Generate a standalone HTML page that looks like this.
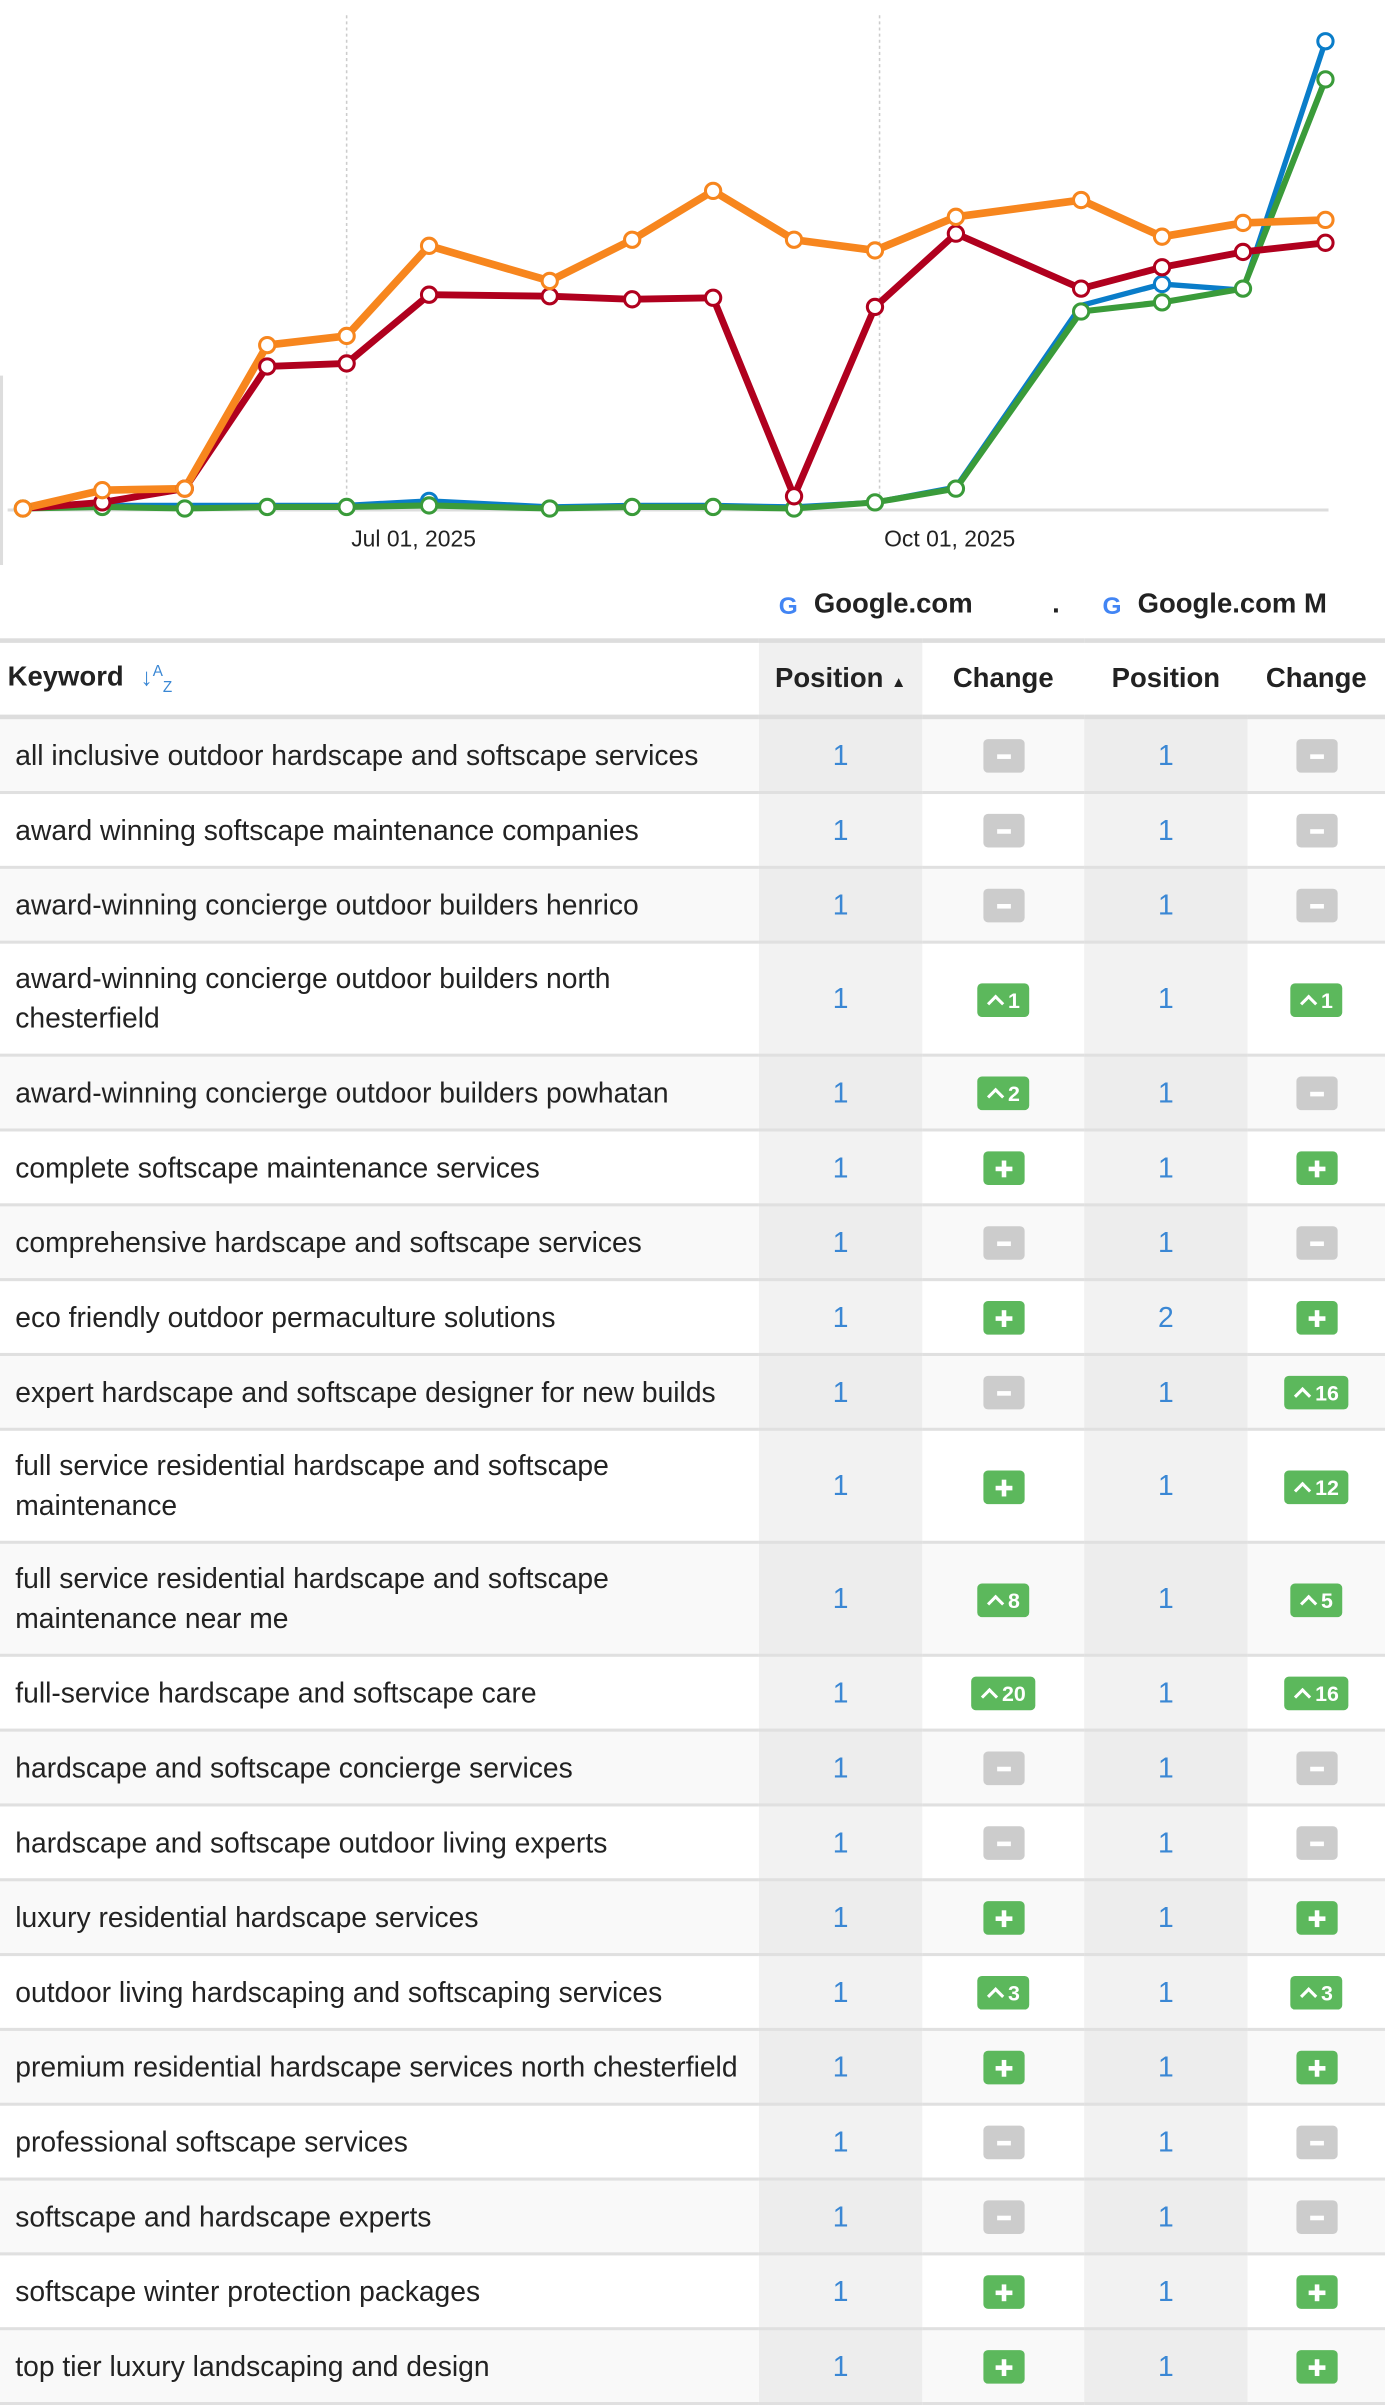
<!DOCTYPE html>
<html><head><meta charset="utf-8">
<style>
html,body{margin:0;padding:0;background:#fff;width:1385px;height:2395px;overflow:hidden}
#w{position:absolute;left:0;top:0;width:907px;height:1568px;transform:scale(1.52701);transform-origin:0 0;font-family:"Liberation Sans",Arial,sans-serif;color:#222}
table{position:absolute;left:0;top:418px;width:907px;border-collapse:collapse;table-layout:fixed;border-top:3px solid #ddd}
td,th{padding:0;font-size:18.5px;border-bottom:2px solid #e0e0e0}
th{height:47px;font-weight:bold;text-align:center;border-bottom:3px solid #ddd;font-size:18px}
th.k{text-align:left;padding-left:5px}
td.k{padding-left:10px;padding-right:8px;line-height:26px}
td.p{text-align:center;color:#3a87d4;background:#f2f2f2}
td.c{text-align:center}
tr.g td{background:#f9f9f9}
tr.g td.p{background:#ededed}
tr.s td{height:47px}
tr.d td{height:72px}
.b{display:inline-block;height:22px;line-height:22px;border-radius:3px;color:#fff;font-weight:bold;font-size:14px;vertical-align:middle;position:relative}
.m{width:27px;background:#ccc}
.m:after{content:"";position:absolute;left:9px;top:10px;width:9px;height:3px;background:#fff}
.pl{width:27px;background:#5cb85c}
.pl:before{content:"";position:absolute;left:8px;top:10px;width:11px;height:3px;background:#fff}
.pl:after{content:"";position:absolute;left:12px;top:6px;width:3px;height:11px;background:#fff}
.u{background:#5cb85c;padding:0 6px}
.u i{display:inline-block;width:6px;height:6px;border-left:2.5px solid #fff;border-top:2.5px solid #fff;transform:rotate(45deg);margin:0 4px 0 2px;position:relative;top:1px}
</style></head><body><div id="w">
<svg width="907" height="415" style="position:absolute;left:0;top:0">
<line x1="227" y1="10" x2="227" y2="334" stroke="#ccc" stroke-dasharray="2,2"/>
<line x1="576" y1="10" x2="576" y2="334" stroke="#ccc" stroke-dasharray="2,2"/>
<line x1="5" y1="334" x2="870" y2="334" stroke="#ddd" stroke-width="2"/>
<line x1="1" y1="246" x2="1" y2="370" stroke="#ddd" stroke-width="2"/>
<g fill="none" stroke-linejoin="round">
<polyline stroke="#0a7dc9" stroke-width="3.5" points="15,332 67,331 121,331 175,331 227,331 281,328 360,332 414,331 467,331 520,332 573,329 626,319 708,200 761,186 814,190 868,27"/>
<polyline stroke="#3a9b3a" stroke-width="4" points="15,333 67,332 121,333 175,332 227,332 281,331 360,333 414,332 467,332 520,333 573,329 626,320 708,204 761,198 814,189 868,52"/>
<polyline stroke="#b0001e" stroke-width="4.5" points="15,333 67,329 121,320 175,240 227,238 281,193 360,194 414,196 467,195 520,325 573,201 626,153 708,189 761,175 814,165 868,159"/>
<polyline stroke="#f7861e" stroke-width="5" points="15,333 67,321 121,320 175,226 227,220 281,161 360,184 414,157 467,125 520,157 573,164 626,142 708,131 761,155 814,146 868,144"/>
</g>
<g fill="#fff" stroke-width="2">
<g stroke="#0a7dc9"><circle cx="761" cy="186" r="5"/><circle cx="868" cy="27" r="5"/><circle cx="281" cy="328" r="5"/></g>
<g stroke="#3a9b3a"><circle cx="15" cy="333" r="5"/><circle cx="67" cy="332" r="5"/><circle cx="121" cy="333" r="5"/><circle cx="175" cy="332" r="5"/><circle cx="227" cy="332" r="5"/><circle cx="281" cy="331" r="5"/><circle cx="360" cy="333" r="5"/><circle cx="414" cy="332" r="5"/><circle cx="467" cy="332" r="5"/><circle cx="520" cy="333" r="5"/><circle cx="573" cy="329" r="5"/><circle cx="626" cy="320" r="5"/><circle cx="708" cy="204" r="5"/><circle cx="761" cy="198" r="5"/><circle cx="814" cy="189" r="5"/><circle cx="868" cy="52" r="5"/></g>
<g stroke="#b0001e"><circle cx="67" cy="329" r="5"/><circle cx="121" cy="320" r="5"/><circle cx="175" cy="240" r="5"/><circle cx="227" cy="238" r="5"/><circle cx="281" cy="193" r="5"/><circle cx="360" cy="194" r="5"/><circle cx="414" cy="196" r="5"/><circle cx="467" cy="195" r="5"/><circle cx="520" cy="325" r="5"/><circle cx="573" cy="201" r="5"/><circle cx="626" cy="153" r="5"/><circle cx="708" cy="189" r="5"/><circle cx="761" cy="175" r="5"/><circle cx="814" cy="165" r="5"/><circle cx="868" cy="159" r="5"/></g>
<g stroke="#f7861e"><circle cx="15" cy="333" r="5"/><circle cx="67" cy="321" r="5"/><circle cx="121" cy="320" r="5"/><circle cx="175" cy="226" r="5"/><circle cx="227" cy="220" r="5"/><circle cx="281" cy="161" r="5"/><circle cx="360" cy="184" r="5"/><circle cx="414" cy="157" r="5"/><circle cx="467" cy="125" r="5"/><circle cx="520" cy="157" r="5"/><circle cx="573" cy="164" r="5"/><circle cx="626" cy="142" r="5"/><circle cx="708" cy="131" r="5"/><circle cx="761" cy="155" r="5"/><circle cx="814" cy="146" r="5"/><circle cx="868" cy="144" r="5"/></g>
</g>
<text x="230" y="358" font-family="Liberation Sans,sans-serif" font-size="15" fill="#222">Jul 01, 2025</text>
<text x="579" y="358" font-family="Liberation Sans,sans-serif" font-size="15" fill="#222">Oct 01, 2025</text>
<g font-family="Liberation Sans,Arial,sans-serif" font-weight="bold">
<text x="510" y="402" font-size="16" fill="#4285f4">G</text>
<text x="533" y="401" font-size="18" fill="#222">Google.com</text>
<text x="689" y="401" font-size="18" fill="#222">.</text>
<text x="722" y="402" font-size="16" fill="#4285f4">G</text>
<text x="745" y="401" font-size="18" fill="#222">Google.com M</text>
</g>
</svg>
<table>
<colgroup><col style="width:497px"><col style="width:107px"><col style="width:106px"><col style="width:107px"><col style="width:90px"></colgroup>
<tr><th class="k">Keyword <span style="color:#3a87d4;font-size:16px;font-weight:normal;margin-left:6px">↓<sup style="font-size:10px">A</sup><sub style="font-size:10px">Z</sub></span></th><th style="background:#f0f0f0">Position <span style="font-size:10px">▲</span></th><th>Change</th><th>Position</th><th>Change</th></tr>
<tr class="g s"><td class="k">all inclusive outdoor hardscape and softscape services</td><td class="p">1</td><td class="c"><span class="b m"></span></td><td class="p">1</td><td class="c"><span class="b m"></span></td></tr>
<tr class="s"><td class="k">award winning softscape maintenance companies</td><td class="p">1</td><td class="c"><span class="b m"></span></td><td class="p">1</td><td class="c"><span class="b m"></span></td></tr>
<tr class="g s"><td class="k">award-winning concierge outdoor builders henrico</td><td class="p">1</td><td class="c"><span class="b m"></span></td><td class="p">1</td><td class="c"><span class="b m"></span></td></tr>
<tr class="d"><td class="k">award-winning concierge outdoor builders north chesterfield</td><td class="p">1</td><td class="c"><span class="b u"><i></i>1</span></td><td class="p">1</td><td class="c"><span class="b u"><i></i>1</span></td></tr>
<tr class="g s"><td class="k">award-winning concierge outdoor builders powhatan</td><td class="p">1</td><td class="c"><span class="b u"><i></i>2</span></td><td class="p">1</td><td class="c"><span class="b m"></span></td></tr>
<tr class="s"><td class="k">complete softscape maintenance services</td><td class="p">1</td><td class="c"><span class="b pl"></span></td><td class="p">1</td><td class="c"><span class="b pl"></span></td></tr>
<tr class="g s"><td class="k">comprehensive hardscape and softscape services</td><td class="p">1</td><td class="c"><span class="b m"></span></td><td class="p">1</td><td class="c"><span class="b m"></span></td></tr>
<tr class="s"><td class="k">eco friendly outdoor permaculture solutions</td><td class="p">1</td><td class="c"><span class="b pl"></span></td><td class="p">2</td><td class="c"><span class="b pl"></span></td></tr>
<tr class="g s"><td class="k">expert hardscape and softscape designer for new builds</td><td class="p">1</td><td class="c"><span class="b m"></span></td><td class="p">1</td><td class="c"><span class="b u"><i></i>16</span></td></tr>
<tr class="d"><td class="k">full service residential hardscape and softscape maintenance</td><td class="p">1</td><td class="c"><span class="b pl"></span></td><td class="p">1</td><td class="c"><span class="b u"><i></i>12</span></td></tr>
<tr class="g d"><td class="k">full service residential hardscape and softscape maintenance near me</td><td class="p">1</td><td class="c"><span class="b u"><i></i>8</span></td><td class="p">1</td><td class="c"><span class="b u"><i></i>5</span></td></tr>
<tr class="s"><td class="k">full-service hardscape and softscape care</td><td class="p">1</td><td class="c"><span class="b u"><i></i>20</span></td><td class="p">1</td><td class="c"><span class="b u"><i></i>16</span></td></tr>
<tr class="g s"><td class="k">hardscape and softscape concierge services</td><td class="p">1</td><td class="c"><span class="b m"></span></td><td class="p">1</td><td class="c"><span class="b m"></span></td></tr>
<tr class="s"><td class="k">hardscape and softscape outdoor living experts</td><td class="p">1</td><td class="c"><span class="b m"></span></td><td class="p">1</td><td class="c"><span class="b m"></span></td></tr>
<tr class="g s"><td class="k">luxury residential hardscape services</td><td class="p">1</td><td class="c"><span class="b pl"></span></td><td class="p">1</td><td class="c"><span class="b pl"></span></td></tr>
<tr class="s"><td class="k">outdoor living hardscaping and softscaping services</td><td class="p">1</td><td class="c"><span class="b u"><i></i>3</span></td><td class="p">1</td><td class="c"><span class="b u"><i></i>3</span></td></tr>
<tr class="g s"><td class="k">premium residential hardscape services north chesterfield</td><td class="p">1</td><td class="c"><span class="b pl"></span></td><td class="p">1</td><td class="c"><span class="b pl"></span></td></tr>
<tr class="s"><td class="k">professional softscape services</td><td class="p">1</td><td class="c"><span class="b m"></span></td><td class="p">1</td><td class="c"><span class="b m"></span></td></tr>
<tr class="g s"><td class="k">softscape and hardscape experts</td><td class="p">1</td><td class="c"><span class="b m"></span></td><td class="p">1</td><td class="c"><span class="b m"></span></td></tr>
<tr class="s"><td class="k">softscape winter protection packages</td><td class="p">1</td><td class="c"><span class="b pl"></span></td><td class="p">1</td><td class="c"><span class="b pl"></span></td></tr>
<tr class="g s"><td class="k">top tier luxury landscaping and design</td><td class="p">1</td><td class="c"><span class="b pl"></span></td><td class="p">1</td><td class="c"><span class="b pl"></span></td></tr>
</table>
</div></body></html>
